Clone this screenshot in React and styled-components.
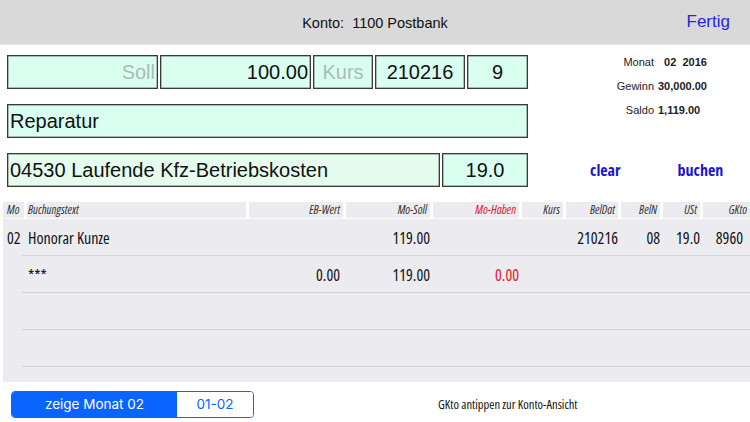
import React from "react";
import styled, { createGlobalStyle } from "styled-components";

const Global = createGlobalStyle`
  html, body { margin: 0; padding: 0; background: #fff; }
  body { width: 750px; height: 422px; overflow: hidden; font-family: "Liberation Sans", Arial, sans-serif; }
  * { box-sizing: border-box; }
`;

const COND = `"Open Sans", "DejaVu Sans Condensed", sans-serif`;

const Page = styled.div`
  width: 750px;
  height: 422px;
  display: flex;
  flex-direction: column;
`;

const Header = styled.header`
  height: 45px;
  flex: none;
  background: #d9d9d9;
  border-bottom: 1px solid #e6e6e6;
  display: grid;
  grid-template-columns: 1fr auto 1fr;
  align-items: center;
`;

const Title = styled.div`
  grid-column: 2;
  font-size: 14.5px;
  color: #111;
  padding-top: 2px;
`;

const Done = styled.div`
  grid-column: 3;
  justify-self: end;
  margin-right: 20px;
  font-size: 17px;
  color: #2727d9;
`;

const FormArea = styled.section`
  display: flex;
  padding: 10px 0 15px 7px;
  flex: none;
`;

const Fields = styled.div`
  width: 521px;
  display: flex;
  flex-direction: column;
  gap: 15px;
`;

const FieldRow = styled.div`
  display: grid;
  grid-template-columns: ${(p) => p.cols};
  gap: 2px;
  height: 34px;
`;

const Field = styled.div`
  background: ${(p) => (p.pale ? "#e6fcee" : "#d9fff0")};
  border: 1px solid #3a3a3a;
  box-shadow: inset 0 0 0 0.5px #777;
  display: flex;
  align-items: center;
  justify-content: ${(p) => p.align || "flex-start"};
  padding: 0 2px;
  font-size: 20px;
  color: ${(p) => (p.placeholder ? "#a9bcb5" : "#111")};
  white-space: nowrap;
  overflow: hidden;
`;

const Side = styled.div`
  flex: 1;
  display: flex;
  flex-direction: column;
`;

const Info = styled.div`
  display: grid;
  grid-template-columns: 126px auto;
  column-gap: 4px;
  row-gap: 11px;
  font-size: 11px;
  line-height: 13px;
  color: #222;
  padding-top: 1px;
`;

const InfoLabel = styled.span`
  text-align: right;
`;

const InfoValue = styled.span`
  font-weight: bold;
  white-space: pre;
`;

const Actions = styled.div`
  margin-top: auto;
  height: 34px;
  display: flex;
  align-items: center;
  padding-left: 62px;
  gap: 57px;
`;

const ActionBtn = styled.span`
  font-family: ${COND};
  font-stretch: 75%;
  font-weight: bold;
  font-size: 16px;
  color: #1b14d0;
`;

const Table = styled.section`
  margin: 0 0 0 3px;
  flex: none;
  display: flex;
  flex-direction: column;
  font-family: ${COND};
  font-stretch: 75%;
`;

const COLS = "21px 219px 94px 84px 86px 41px 52px 39px 37px 47px";

const HeadRow = styled.div`
  display: grid;
  grid-template-columns: ${COLS};
  column-gap: 3px;
  height: 16px;
`;

const HeadCell = styled.div`
  background: #ebebf0;
  font-size: 12px;
  font-style: italic;
  color: ${(p) => (p.red ? "#e0161e" : "#333")};
  text-align: ${(p) => (p.left ? "left" : "right")};
  padding: 0 ${(p) => (p.left ? "0" : "3px")} 0 ${(p) => p.pl || "0"};
  line-height: 16px;
  white-space: nowrap;
`;

const Body = styled.div`
  margin-top: 1px;
  background: #ebebf0;
  height: 163px;
  display: flex;
  flex-direction: column;
`;

const DataRow = styled.div`
  display: grid;
  grid-template-columns: ${COLS};
  column-gap: 3px;
  height: 37px;
  align-items: center;
  position: relative;
  flex: none;
  &::after {
    content: "";
    position: absolute;
    left: 19px;
    right: 0;
    bottom: 0;
    height: 1px;
    background: #d3d3d8;
  }
`;

const Cell = styled.div`
  font-size: 16px;
  font-weight: 500;
  color: ${(p) => (p.red ? "#e0161e" : "#111")};
  text-align: ${(p) => (p.left ? "left" : "right")};
  padding: 0 ${(p) => (p.left ? "0" : p.pr || "0px")} 0 ${(p) => p.pl || "0"};
  white-space: nowrap;
`;

const Footer = styled.footer`
  flex: 1;
  display: flex;
  align-items: center;
  padding: 4px 0 0 11px;
`;

const Segmented = styled.div`
  display: flex;
  width: 243px;
  height: 27px;
  border: 1px solid #0a64ff;
  border-radius: 4px;
  overflow: hidden;
`;

const Segment = styled.div`
  flex: ${(p) => (p.active ? "0 0 165px" : "1")};
  background: ${(p) => (p.active ? "#0a64ff" : "#fff")};
  color: ${(p) => (p.active ? "#fff" : "#0a64ff")};
  display: flex;
  align-items: center;
  justify-content: center;
  font-size: 13.5px;
  font-family: "Inter", "Liberation Sans", sans-serif;
`;

const Hint = styled.div`
  margin-left: 184px;
  font-family: ${COND};
  font-stretch: 75%;
  font-size: 12.5px;
  color: #111;
`;

const heads = [
  ["Mo", true, false, "4px"],
  ["Buchungstext", true, false, "1px"],
  ["EB-Wert"],
  ["Mo-Soll"],
  ["Mo-Haben", false, true],
  ["Kurs"],
  ["BelDat"],
  ["BelN"],
  ["USt"],
  ["GKto"],
];

export default function App() {
  return (
    <Page>
      <Global />
      <Header>
        <Title>Konto:&nbsp; 1100 Postbank</Title>
        <Done>Fertig</Done>
      </Header>
      <FormArea>
        <Fields>
          <FieldRow cols="151px 151px 60px 90px 61px">
            <Field align="flex-end" placeholder="1">Soll</Field>
            <Field align="flex-end">100.00</Field>
            <Field align="center" placeholder="1">Kurs</Field>
            <Field align="center">210216</Field>
            <Field align="center">9</Field>
          </FieldRow>
          <FieldRow cols="1fr">
            <Field>Reparatur</Field>
          </FieldRow>
          <FieldRow cols="433px 86px">
            <Field pale="1">04530 Laufende Kfz-Betriebskosten</Field>
            <Field align="center">19.0</Field>
          </FieldRow>
        </Fields>
        <Side>
          <Info>
            <InfoLabel>Monat</InfoLabel>
            <InfoValue>  02  2016</InfoValue>
            <InfoLabel>Gewinn</InfoLabel>
            <InfoValue>30,000.00</InfoValue>
            <InfoLabel>Saldo</InfoLabel>
            <InfoValue>1,119.00</InfoValue>
          </Info>
          <Actions>
            <ActionBtn>clear</ActionBtn>
            <ActionBtn>buchen</ActionBtn>
          </Actions>
        </Side>
      </FormArea>
      <Table>
        <HeadRow>
          {heads.map(([t, left, red, pl]) => (
            <HeadCell key={t} left={left} red={red} pl={pl}>
              {t}
            </HeadCell>
          ))}
        </HeadRow>
        <Body>
          <DataRow>
            <Cell left pl="4px">02</Cell>
            <Cell left pl="1px">Honorar Kunze</Cell>
            <Cell />
            <Cell>119.00</Cell>
            <Cell />
            <Cell />
            <Cell>210216</Cell>
            <Cell pr="0px">08</Cell>
            <Cell>19.0</Cell>
            <Cell pr="7px">8960</Cell>
          </DataRow>
          <DataRow>
            <Cell />
            <Cell left pl="1px">***</Cell>
            <Cell pr="3px">0.00</Cell>
            <Cell>119.00</Cell>
            <Cell red>0.00</Cell>
            <Cell />
            <Cell />
            <Cell />
            <Cell />
            <Cell />
          </DataRow>
          <DataRow />
          <DataRow />
        </Body>
      </Table>
      <Footer>
        <Segmented>
          <Segment active>zeige Monat 02</Segment>
          <Segment>01-02</Segment>
        </Segmented>
        <Hint>GKto antippen zur Konto-Ansicht</Hint>
      </Footer>
    </Page>
  );
}
